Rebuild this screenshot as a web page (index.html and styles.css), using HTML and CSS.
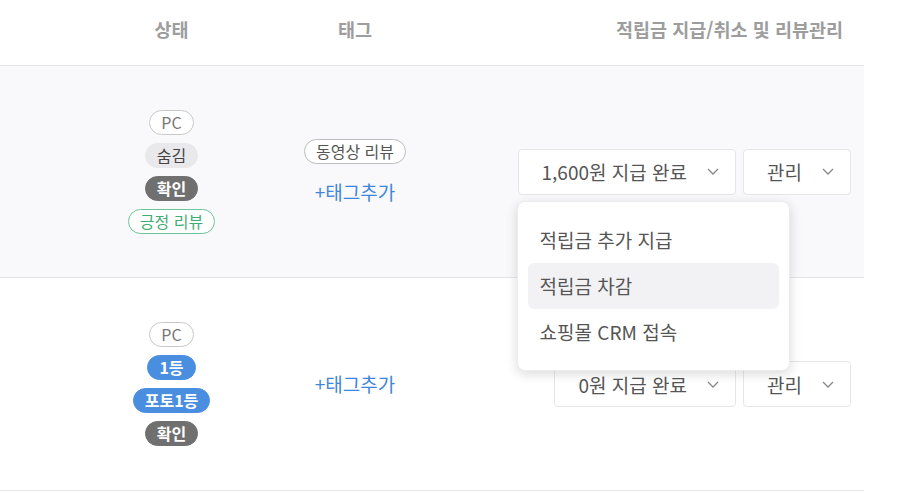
FILE: index.html
```html
<!DOCTYPE html>
<html lang="ko">
  <head>
    <meta charset="UTF-8" />
    <title>리뷰 관리</title>
    <link rel="stylesheet" href="styles.css">
  </head>
  <body>
    <div class="review-table">
      <div class="row head">
        <div class="cell blank"></div>
        <div class="cell status">상태</div>
        <div class="cell tags">태그</div>
        <div class="cell actions">적립금 지급/취소 및 리뷰관리</div>
      </div>

      <div class="row shaded">
        <div class="cell blank"></div>
        <div class="cell status">
          <span class="badge outline">PC</span>
          <span class="badge light">숨김</span>
          <span class="badge dark">확인</span>
          <span class="badge green">긍정 리뷰</span>
        </div>
        <div class="cell tags">
          <span class="badge outline tag">동영상 리뷰</span>
          <a class="add-tag" href="#">+태그추가</a>
        </div>
        <div class="cell actions">
          <div class="select-wrap">
            <button class="select">1,600원 지급 완료
              <svg class="chev" viewBox="0 0 12 7"><polyline points="1,1 6,6 11,1"/></svg>
            </button>
            <ul class="menu">
              <li>적립금 추가 지급</li>
              <li class="active">적립금 차감</li>
              <li>쇼핑몰 CRM 접속</li>
            </ul>
          </div>
          <button class="select">관리
            <svg class="chev" viewBox="0 0 12 7"><polyline points="1,1 6,6 11,1"/></svg>
          </button>
        </div>
      </div>

      <div class="row">
        <div class="cell blank"></div>
        <div class="cell status">
          <span class="badge outline">PC</span>
          <span class="badge blue">1등</span>
          <span class="badge blue">포토1등</span>
          <span class="badge dark">확인</span>
        </div>
        <div class="cell tags">
          <a class="add-tag" href="#">+태그추가</a>
        </div>
        <div class="cell actions">
          <button class="select">0원 지급 완료
            <svg class="chev" viewBox="0 0 12 7"><polyline points="1,1 6,6 11,1"/></svg>
          </button>
          <button class="select">관리
            <svg class="chev" viewBox="0 0 12 7"><polyline points="1,1 6,6 11,1"/></svg>
          </button>
        </div>
      </div>
    </div>
  </body>
</html>
```

FILE: styles.css
```css
*{
    box-sizing: border-box;
    margin: 0;
    padding: 0;
}
body{
    font-family: "Noto Sans CJK KR", "Noto Sans", sans-serif;
    background-color: #fff;
    color: #555;
}
.review-table{
    width: 864px;
}
.row{
    display: grid;
    grid-template-columns: 100px 143px 224px 1fr;
    align-items: center;
    height: 213px;
    border-bottom: 1px solid #e4e4e8;
}
.row.head{
    height: 66px;
    font-size: 18.5px;
    font-weight: 700;
    color: #9d9d9d;
}
.row.head .cell{
    padding-bottom: 8px;
}
.row.shaded{
    background-color: #f9f9fb;
    height: 212px;
}
.cell.status,
.cell.tags{
    display: flex;
    flex-direction: column;
    align-items: center;
    text-align: center;
}
.cell.status{
    gap: 8px;
}
.cell.actions{
    display: flex;
    justify-content: flex-end;
    gap: 7px;
    padding-right: 13px;
}
.row.head .cell.actions{
    padding-right: 21px;
}
/* badges */
.badge{
    display: inline-block;
    height: 25px;
    line-height: 23px;
    padding: 0 11px;
    border: 1px solid transparent;
    border-radius: 13px;
    font-size: 16px;
    white-space: nowrap;
}
.badge.outline{
    background-color: #fff;
    border-color: #c9c9c9;
    color: #777;
}
.badge.light{
    background-color: #e9e9eb;
    border-color: #e9e9eb;
    color: #444;
}
.badge.dark{
    background-color: #707070;
    border-color: #707070;
    color: #fff;
    font-weight: 700;
}
.badge.blue{
    background-color: #4a8ee0;
    border-color: #4a8ee0;
    color: #fff;
    font-weight: 700;
}
.badge.green{
    background-color: #fff;
    border-color: #6cc596;
    color: #3fad74;
}
.badge.tag{
    color: #555;
    border-color: #bdbdbd;
}
.add-tag{
    display: block;
    font-size: 19px;
    line-height: 26px;
    color: #3f86dc;
    text-decoration: none;
}
.badge.tag + .add-tag{
    margin-top: 15px;
}
/* selects */
.select-wrap{
    position: relative;
}
.select{
    display: flex;
    align-items: center;
    height: 46px;
    padding: 0 16px 0 23px;
    background-color: #fff;
    border: 1px solid #e6e6e9;
    border-radius: 4px;
    font-family: inherit;
    font-size: 19px;
    color: #555;
    cursor: pointer;
}
.chev{
    width: 12px;
    height: 7px;
    margin-left: 20px;
    fill: none;
    stroke: #888;
    stroke-width: 1.3;
}
.menu{
    position: absolute;
    top: 52px;
    left: -1px;
    width: 273px;
    padding: 15px 10px 15px;
    list-style: none;
    background-color: #fff;
    border: 1px solid #ececef;
    border-radius: 8px;
    box-shadow: 0 3px 12px rgba(0, 0, 0, 0.15);
    z-index: 10;
}
.menu li{
    height: 46px;
    line-height: 46px;
    padding-left: 12px;
    border-radius: 6px;
    font-size: 19px;
    color: #555;
    cursor: pointer;
}
.menu li.active{
    background-color: #f2f2f4;
}
```
